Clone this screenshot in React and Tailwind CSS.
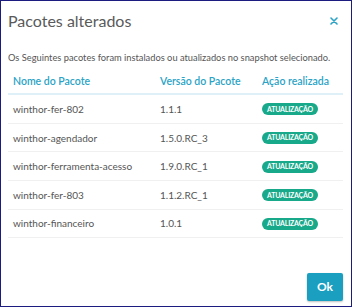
const rows = [
  { name: "winthor-fer-802", version: "1.1.1" },
  { name: "winthor-agendador", version: "1.5.0.RC_3" },
  { name: "winthor-ferramenta-acesso", version: "1.9.0.RC_1" },
  { name: "winthor-fer-803", version: "1.1.2.RC_1" },
  { name: "winthor-financeiro", version: "1.0.1" },
];

const App = () => {
  return (
    <div className="w-[353px] h-[308px] bg-white">
      <div
        className="w-[352px] h-[307px] border border-[#1b1b80] flex flex-col px-[7px] text-[#555]"
        style={{ fontFamily: "Lato, 'Open Sans', sans-serif" }}
      >
        <div className="flex items-center justify-between h-[37px] pt-[2px]">
          <h1 className="text-[16px] text-[#5a5a5a] leading-none">Pacotes alterados</h1>
          <svg width="8" height="8" viewBox="0 0 8 8" className="mr-[6px]">
            <path d="M1 1L7 7M7 1L1 7" stroke="#2aa3c6" strokeWidth="1.6" strokeLinecap="round" />
          </svg>
        </div>
        <p className="mt-[15px] text-[9.3px] leading-none text-[#555]">
          Os Seguintes pacotes foram instalados ou atualizados no snapshot selecionado.
        </p>
        <div className="mt-[14px] mr-[1px]">
          <div className="flex h-[19px] items-start border-b-2 border-[#dff0f8] text-[10.5px] font-semibold text-[#2aa3c6] leading-none">
            <div className="w-[152px] pl-[5px]">Nome do Pacote</div>
            <div className="w-[102px]">Versão do Pacote</div>
            <div>Ação realizada</div>
          </div>
          {rows.map((row) => (
            <div
              key={row.name}
              className="flex h-[28.6px] items-center border-b border-[#f0f0f0] text-[10px] text-[#555] leading-none"
            >
              <div className="w-[152px] pl-[5px]">{row.name}</div>
              <div className="w-[102px]">{row.version}</div>
              <div>
                <span className="inline-flex items-center h-[12px] px-[5px] rounded-full bg-[#17a98a] text-white text-[7px] font-bold tracking-[-0.2px]">
                  ATUALIZAÇÃO
                </span>
              </div>
            </div>
          ))}
        </div>
        <div className="flex-1" />
        <div className="flex justify-end mb-[5px] mr-[1px]">
          <button className="w-[36px] h-[28px] rounded-[2px] bg-[#1a9fc1] text-white text-[12px] font-bold shadow-[0_1px_2px_rgba(0,0,0,0.25)]">
            Ok
          </button>
        </div>
      </div>
    </div>
  );
};

export default App;
